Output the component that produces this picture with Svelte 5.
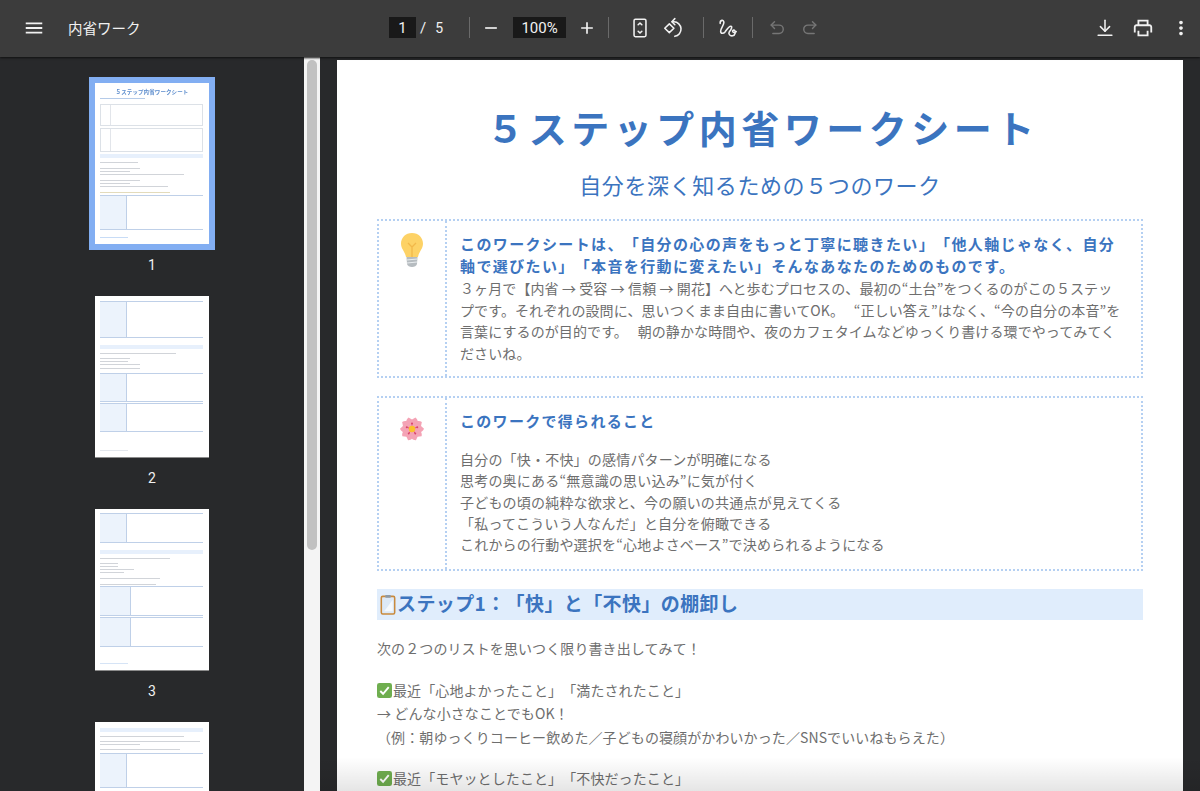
<script lang="ts">
	type Item = { t: string; y: number; w?: number; h?: number; col?: number; c?: string }

	const line = (y: number, w: number, c = '#c9cdd3'): Item => ({ t: 'line', y, w, c })
	const table = (y: number, h: number, col = 26): Item => ({ t: 'table', y, h, col })
	const band = (y: number, h = 4): Item => ({ t: 'band', y, h })

	// y values are offsets from the top of each thumbnail, in px
	const thumbs: { n: number; items: Item[] }[] = [
		{
			n: 1,
			items: [
				line(15, 45, '#a9c3e6'),
				{ t: 'box', y: 21, h: 22 },
				{ t: 'box', y: 45, h: 24 },
				band(71),
				line(79, 38),
				line(85, 40),
				line(88, 30),
				line(91, 84),
				line(97, 40),
				line(100, 30),
				line(103, 68),
				line(109, 70, '#dfd5b0'),
				table(112, 35),
				line(154, 28, '#bfd6f5'),
			],
		},
		{
			n: 2,
			items: [
				table(5, 37),
				band(49),
				line(57, 76),
				line(62, 30),
				line(65, 28),
				line(68, 40),
				line(72, 40),
				table(77, 29),
				table(107, 29),
				line(154, 28, '#dfe3ea'),
			],
		},
		{
			n: 3,
			items: [
				table(4, 30),
				band(41),
				line(49, 70),
				line(54, 18),
				line(57, 18),
				line(60, 34),
				line(63, 24),
				line(69, 60),
				line(75, 56),
				table(77, 30, 30),
				table(108, 30, 30),
				line(154, 28, '#cfe0f5'),
			],
		},
		{
			n: 4,
			items: [
				band(6),
				line(14, 84),
				line(19, 100),
				line(22, 40),
				line(27, 80),
				table(31, 35),
			],
		},
	]

	const learnings = [
		'自分の「快・不快」の感情パターンが明確になる',
		'思考の奥にある“無意識の思い込み”に気が付く',
		'子どもの頃の純粋な欲求と、今の願いの共通点が見えてくる',
		'「私ってこういう人なんだ」と自分を俯瞰できる',
		'これからの行動や選択を“心地よさベース”で決められるようになる',
	]
</script>

{#snippet check()}
	<svg class="emoji-check" viewBox="0 0 16 16">
		<rect x="0" y="0" width="16" height="16" rx="2.5" fill="#6fae4f" />
		<path d="M3.5 8.5l3 3 6-7" fill="none" stroke="#fff" stroke-width="2" />
	</svg>
{/snippet}

<div class="viewer">
	<header class="toolbar">
		<div class="start">
			<svg class="icon menu" viewBox="0 0 24 24"><path d="M3 18h18v-2H3v2zm0-5h18v-2H3v2zm0-7v2h18V6H3z" /></svg>
			<span class="doc-title">内省ワーク</span>
		</div>

		<div class="center">
			<span class="field page-field">1</span>
			<span class="slash">/</span>
			<span class="total">5</span>
			<span class="sep sep-a"></span>
			<svg class="icon zoom-btn" viewBox="0 0 24 24"><path d="M19 13H5v-2h14v2z" /></svg>
			<span class="field zoom-field">100%</span>
			<svg class="icon zoom-btn" viewBox="0 0 24 24"><path d="M19 13h-6v6h-2v-6H5v-2h6V5h2v6h6v2z" /></svg>
			<span class="sep sep-b"></span>
			<svg class="icon stroke fit" viewBox="0 0 24 24">
				<rect x="5.5" y="2.5" width="13" height="19" rx="1.5" />
				<path d="M10 8.5l2-2 2 2" />
				<path d="M10 15.5l2 2 2-2" />
			</svg>
			<svg class="icon stroke rotate" viewBox="0 0 24 24">
				<path d="M8 7.5l5 4.8-5 4.8-5-4.800z" />
				<path d="M11 5.2h2a8 8 0 0 1 1 15.9" />
				<path d="M14 1.8l-3.2 3.4 3.2 3.2" />
			</svg>
			<span class="sep sep-c"></span>
			<svg class="icon stroke draw" viewBox="0 0 24 24">
				<path d="M3.500 7C3 3 7.500 2.500 7.500 6c0 3-3.500 6-3.500 9.500 0 3 3 3 5 .5 2-2.800 4-6 6-6 2.200 0 .5 4-1.500 6-1.500 2 .5 5 3.500 4.500 3-.6 3.800-5 2-6-1.500-.8-3 1.300-1 2.200 1 .4 2.200 0 3-.700" />
			</svg>
			<span class="sep sep-d"></span>
			<svg class="icon stroke dim undo" viewBox="0 0 24 24">
				<path d="M9 4.500L5 8.500l4 4" />
				<path d="M5 8.500h9.500a5 5 0 0 1 0 10H7" />
			</svg>
			<svg class="icon stroke dim redo" viewBox="0 0 24 24">
				<path d="M15 4.500l4 4-4 4" />
				<path d="M19 8.500H9.500a5 5 0 0 0 0 10H17" />
			</svg>
		</div>

		<div class="end">
			<svg class="icon stroke" viewBox="0 0 24 24">
				<path d="M12 3.500v12" />
				<path d="M7 10.500l5 5 5-5" />
				<path d="M4.500 20h15" />
			</svg>
			<svg class="icon" viewBox="0 0 24 24">
				<path d="M19 8h-1V3H6v5H5c-1.660 0-3 1.340-3 3v6h4v4h12v-4h4v-6c0-1.660-1.340-3-3-3zM8 5h8v3H8V5zm8 14H8v-4h8v4zm2-2v-2H6v2H4v-6c0-.550.450-1 1-1h14c.550 0 1 .450 1 1v6h-2z" />
			</svg>
			<svg class="icon" viewBox="0 0 24 24">
				<path d="M12 8c1.100 0 2-.9 2-2s-.9-2-2-2-2 .9-2 2 .9 2 2 2zm0 2c-1.100 0-2 .9-2 2s.9 2 2 2 2-.9 2-2-.9-2-2-2zm0 6c-1.100 0-2 .9-2 2s.9 2 2 2 2-.9 2-2-.9-2-2-2z" />
			</svg>
		</div>
	</header>

	<div class="body">
		<aside class="sidebar">
			{#each thumbs as thumb}
				<div class="thumb-wrap">
					<div class="thumb" class:selected={thumb.n === 1}>
						<div class="thumb-inner">
							{#if thumb.n === 1}
								<span class="thumb-title">５ステップ内省ワークシート</span>
							{/if}
							{#each thumb.items as item}
								<div
									class="ti {item.t}"
									style:top="{item.y}px"
									style:width={item.w ? `${item.w}px` : undefined}
									style:height={item.h ? `${item.h}px` : undefined}
									style:background={item.c}
									style:--col={item.col ? `${item.col}px` : undefined}
								></div>
							{/each}
						</div>
					</div>
					{#if thumb.n < 4}
						<span class="thumb-num">{thumb.n}</span>
					{/if}
				</div>
			{/each}
		</aside>

		<div class="scrollbar"><div class="scroll-thumb"></div></div>

		<main class="stage">
			<article class="page">
				<h1>５ステップ内省ワークシート</h1>
				<p class="subtitle">自分を深く知るための５つのワーク</p>

				<section class="note note-intro">
					<div class="note-icon">
						<svg class="bulb" viewBox="0 0 24 36">
							<path d="M12 1C5.500 1 1 5.800 1 11.500c0 5.500 4 8 5 13.500h12c1-5.500 5-8 5-13.500C23 5.800 18.500 1 12 1z" fill="#fdd266" />
							<path d="M8 11l4 4 4-4M12 15v10" fill="none" stroke="#f2b84a" stroke-width="1.300" />
							<path d="M6.500 25h11l-.5 7c-.5 2-2.500 3-5 3s-4.500-1-5-3z" fill="#b6bcc0" />
							<path d="M6.500 28l11-1M7 31l10-1" stroke="#e8ecee" stroke-width="1.200" />
						</svg>
					</div>
					<div class="note-text">
						<p class="lead">
							このワークシートは、「自分の心の声をもっと丁寧に聴きたい」「他人軸じゃなく、自分<br />軸で選びたい」「本音を行動に変えたい」そんなあなたのためのものです。
						</p>
						<p class="intro-body">
							３ヶ月で【内省 → 受容 → 信頼 → 開花】へと歩むプロセスの、最初の“土台”をつくるのがこの５ステッ<br />プです。それぞれの設問に、思いつくまま自由に書いてOK。&nbsp;&nbsp;&nbsp;“正しい答え”はなく、“今の自分の本音”を<br />言葉にするのが目的です。&nbsp;&nbsp;&nbsp;朝の静かな時間や、夜のカフェタイムなどゆっくり書ける環でやってみてく<br />ださいね。
						</p>
					</div>
				</section>

				<section class="note note-gains">
					<div class="note-icon">
						<svg class="flower" viewBox="0 0 26 26">
							{#each [0, 72, 144, 216, 288] as deg}
								<g transform="rotate({deg} 13 13)">
									<path d="M13 13C6 11 6 4 9.500 1.500l3.500 2 3.500-2C20 4 20 11 13 13z" fill="#f4a3b5" />
									<path d="M13 12V8" stroke="#d9436a" stroke-width=".8" />
									<circle cx="13" cy="7.500" r="1" fill="#d9436a" />
								</g>
							{/each}
							<circle cx="13" cy="13" r="3.200" fill="#fbc02d" />
						</svg>
					</div>
					<div class="note-text">
						<p class="gains-title">このワークで得られること</p>
						<p class="gains-body">
							{#each learnings as row}
								{row}<br />
							{/each}
						</p>
					</div>
				</section>

				<h2>
					<svg class="clip" viewBox="0 0 16 22">
						<rect x="1" y="2.500" width="14" height="18.500" rx="1.500" fill="#dce9f7" stroke="#c98a3d" stroke-width="1.600" />
						<path d="M4 18L13 6v12z" fill="#fff" opacity=".7" />
						<rect x="5" y="1" width="6" height="3" rx="1" fill="#8e9aa5" />
					</svg><span class="h2-text">ステップ1：「快」と「不快」の棚卸し</span>
				</h2>

				<p class="plain">次の２つのリストを思いつく限り書き出してみて！</p>

				<p class="plain list-one">
					{@render check()}最近「心地よかったこと」「満たされたこと」<br />→ どんな小さなことでもOK！<br />（例：朝ゆっくりコーヒー飲めた／子どもの寝顔がかわいかった／SNSでいいねもらえた）
				</p>

				<p class="plain list-two">
					{@render check()}最近「モヤッとしたこと」「不快だったこと」
				</p>
			</article>
			<div class="fade"></div>
		</main>
	</div>
</div>

<style>
	:global(body) {
		margin: 0;
		background: #28292b;
	}

	.viewer {
		height: 100vh;
		display: flex;
		flex-direction: column;
		overflow: hidden;
		font-family: 'Noto Sans CJK JP', 'Noto Sans', sans-serif;
		text-spacing-trim: space-all;
	}

	.toolbar {
		flex: none;
		height: 57px;
		box-sizing: border-box;
		padding-bottom: 2px;
		display: grid;
		grid-template-columns: 389px 1fr auto;
		align-items: center;
		background: #3c3c3c;
		color: #f1f1f1;
		box-shadow: 0 1px 2px #111;
		position: relative;
		z-index: 2;
	}

	.start,
	.center,
	.end {
		display: flex;
		align-items: center;
	}

	.start {
		padding-left: 23px;
	}

	.icon {
		display: block;
		width: 22px;
		height: 22px;
		flex: none;
		fill: #f1f1f1;
	}

	.icon.stroke {
		fill: none;
		stroke: #f1f1f1;
		stroke-width: 1.700;
		stroke-linecap: round;
		stroke-linejoin: round;
	}

	.icon.dim {
		stroke: #767676;
		width: 20px;
		height: 20px;
	}

	.doc-title {
		margin-left: 23px;
		font-size: 14.500px;
		line-height: 20px;
	}

	.field {
		background: #191919;
		height: 21px;
		display: flex;
		align-items: center;
		justify-content: center;
		font-size: 15px;
		font-family: 'Roboto', sans-serif;
	}

	.page-field {
		width: 27px;
	}

	.slash {
		margin-left: 4px;
		font-size: 15px;
		font-family: 'Roboto', sans-serif;
	}

	.total {
		margin-left: 9px;
		font-size: 14px;
		font-family: 'Roboto', sans-serif;
	}

	.sep {
		width: 1px;
		height: 21px;
		background: #6a6a6a;
		flex: none;
	}

	.sep-a {
		margin-left: 26px;
		margin-right: 11px;
	}

	.zoom-btn {
		width: 20px;
		height: 20px;
	}

	.zoom-field {
		width: 53px;
		margin: 0 11px 0 12px;
	}

	.sep-b {
		margin-left: 11px;
		margin-right: 20px;
	}

	.rotate {
		margin-left: 11px;
	}

	.sep-c {
		margin-left: 19px;
		margin-right: 13px;
	}

	.sep-d {
		margin-left: 13px;
		margin-right: 14px;
	}

	.redo {
		margin-left: 13px;
	}

	.end {
		gap: 16px;
		padding-right: 8px;
	}

	.body {
		flex: 1;
		min-height: 0;
		display: flex;
	}

	.sidebar {
		width: 304px;
		flex: none;
		padding-top: 20px;
		display: flex;
		flex-direction: column;
		align-items: center;
		overflow: hidden;
		background: #28292b;
	}

	.thumb-wrap {
		flex: none;
		height: 213px;
		display: flex;
		flex-direction: column;
		align-items: center;
	}

	.thumb {
		position: relative;
		flex: none;
		width: 114px;
		height: 161px;
		background: #fff;
		box-shadow: 0 1px 0 #8b8b8b;
		margin-top: 6px;
	}

	.thumb.selected {
		box-shadow: 0 0 0 6px #82aef2;
	}

	.thumb-inner {
		position: absolute;
		inset: 0;
		overflow: hidden;
		filter: blur(0.4px);
		opacity: 0.85;
	}

	.thumb-title {
		position: absolute;
		left: 0;
		right: 0;
		top: 5px;
		text-align: center;
		font-size: 5.500px;
		font-weight: 700;
		line-height: 8px;
		color: #3f78c4;
		letter-spacing: 0.1px;
	}

	.ti {
		position: absolute;
		left: 5px;
	}

	.line {
		height: 1px;
	}

	.box {
		width: 103px;
		box-sizing: border-box;
		border: 1px solid #d7dce3;
	}

	.box::before {
		content: '';
		display: block;
		width: 9px;
		height: 100%;
		border-right: 1px solid #dde1e7;
	}

	.band {
		width: 103px;
		background: #e3eefc;
	}

	.table {
		width: 103px;
		box-sizing: border-box;
		border-top: 1px solid #b4c8e4;
		border-bottom: 1px solid #b4c8e4;
	}

	.table::before {
		content: '';
		display: block;
		width: var(--col);
		height: 100%;
		background: #e9f1fc;
		border-right: 1px solid #b4c8e4;
	}

	.thumb-num {
		margin-top: 13px;
		font-size: 14px;
		line-height: 16px;
		color: #f1f1f1;
		font-family: 'Roboto', sans-serif;
	}

	.scrollbar {
		width: 16px;
		flex: none;
		background: #f4f4f4;
		box-sizing: border-box;
		padding: 3px 3px 0;
	}

	.scroll-thumb {
		height: 490px;
		background: #c1c1c1;
		border-radius: 6px;
	}

	.stage {
		position: relative;
		flex: 1;
		min-width: 0;
		padding: 3px 0 0 17px;
		overflow: hidden;
		background: #28292b;
	}

	.page {
		width: 846px;
		height: 1196px;
		box-sizing: border-box;
		padding: 0 40px;
		background: #fff;
		color: #6e6e6e;
		font-size: 14px;
		letter-spacing: 0.1px;
	}

	h1 {
		margin: 0;
		padding: 37px 0 0 5px;
		text-align: center;
		font-size: 38px;
		line-height: 60px;
		font-weight: 700;
		color: #3b74bf;
		letter-spacing: 4.500px;
	}

	.subtitle {
		margin: 11px 0 0;
		text-align: center;
		font-size: 22px;
		line-height: 32px;
		color: #3b74bf;
		letter-spacing: 0.6px;
	}

	p {
		margin: 0;
	}

	.note {
		display: grid;
		grid-template-columns: 68px 1fr;
		border: 2px dotted #b5d0f2;
		white-space: nowrap;
		box-sizing: border-box;
	}

	.note-intro {
		margin-top: 19px;
		height: 159px;
	}

	.note-gains {
		margin-top: 18px;
		height: 175px;
	}

	.note-icon {
		display: flex;
		justify-content: center;
		border-right: 2px dotted #b5d0f2;
	}

	.bulb {
		width: 24px;
		height: 36px;
		margin-top: 11px;
	}

	.flower {
		width: 26px;
		height: 26px;
		margin-top: 18px;
	}

	.note-text {
		padding: 12px 0 0 13px;
		line-height: 21.500px;
	}

	.intro-body {
		padding-top: 1px;
	}

	.gains-body {
		line-height: 21.300px;
		letter-spacing: 0.2px;
	}

	.lead {
		font-size: 15px;
		font-weight: 700;
		line-height: 22px;
		color: #3b74bf;
		letter-spacing: 1.380px;
	}

	.gains-title {
		font-size: 15px;
		font-weight: 700;
		line-height: 22px;
		color: #3b74bf;
		letter-spacing: 1.300px;
		margin-bottom: 17px;
	}

	h2 {
		margin: 18px 0 0;
		height: 31px;
		background: #e0edfc;
		display: flex;
		align-items: center;
		font-size: 19px;
		font-weight: 700;
		color: #3b74bf;
		letter-spacing: 0.4px;
	}

	.h2-text {
		line-height: 27px;
		padding-bottom: 4px;
	}

	.clip {
		width: 16px;
		height: 21px;
		margin: 0 1px 0 3px;
	}

	.plain {
		line-height: 23.500px;
		white-space: nowrap;
	}

	h2 + .plain {
		margin-top: 17px;
	}

	.list-one {
		margin-top: 18px;
	}

	.list-two {
		margin-top: 18px;
	}

	.emoji-check {
		width: 15px;
		height: 15px;
		vertical-align: -2px;
		margin-right: 1px;
	}

	.fade {
		position: absolute;
		left: 0;
		right: 0;
		bottom: 0;
		height: 34px;
		background: linear-gradient(transparent, rgb(0 0 0 / 0.1));
	}
</style>
